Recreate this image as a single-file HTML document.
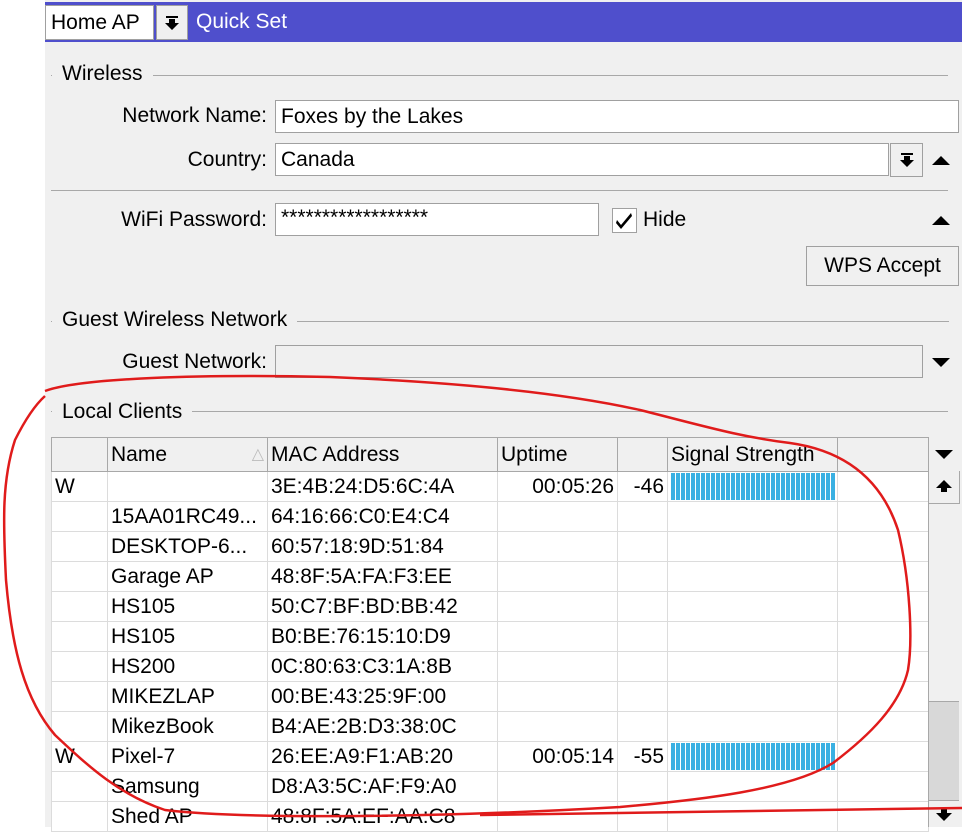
<!DOCTYPE html>
<html><head><meta charset="utf-8"><style>
*{margin:0;padding:0;box-sizing:border-box}
body{width:962px;height:827px;overflow:hidden;background:#fff;font-family:"Liberation Sans",sans-serif;font-size:21px;color:#000;position:relative}
.a{position:absolute}
.inp{position:absolute;background:#fff;border:1px solid #a0a0a0;padding-left:5px;line-height:31px;height:33px}
.lbl{position:absolute;text-align:right;line-height:30px}
.sec{position:absolute;left:51px;right:14px;height:1px;background:#a8a8a8}
.sect{position:absolute;background:#f0f0f0;padding:0 10px;line-height:26px}
.tri{position:absolute;width:0;height:0;border-left:9px solid transparent;border-right:9px solid transparent}
.up{border-bottom:9px solid #000}
.dn{border-top:9px solid #000}
table{position:absolute;left:51px;top:437px;border-collapse:collapse;background:#fff;table-layout:fixed;width:877px}
td,th{border:1px solid #dcdcdc;height:30px;padding:0 3px;font-weight:normal;text-align:left;white-space:nowrap;overflow:hidden;line-height:28px}
th{background:#f0f0f0;border-color:#a8a8a8;height:34px}
.bar{display:inline-block;width:164px;height:27px;vertical-align:middle;background:repeating-linear-gradient(90deg,#3ab0e2 0 4px,#fff 4px 5px)}
</style></head><body>
<div class="a" style="left:45px;top:0;width:917px;height:827px;background:#f0f0f0"></div>
<div class="a" style="left:45px;top:2px;width:917px;height:40px;background:#4f4fcc"></div>
<div class="a" style="left:45px;top:5px;width:109px;height:35px;background:#fff;border:1px solid #a0a0a0;padding-left:5px;line-height:33px">Home AP</div>
<div class="a" style="left:156px;top:5px;width:32px;height:35px;background:#f0f0f0;border:1px solid #a0a0a0"><svg width="30" height="33"><rect x="9" y="10" width="12" height="2"/><path d="M12 13h6v4h4l-7 7-7-7h4z"/></svg></div>
<div class="a" style="left:196px;top:8px;color:#fff;line-height:28px">Quick Set</div>

<div class="sec" style="top:75px"></div>
<div class="sect" style="left:52px;top:61px">Wireless</div>
<div class="lbl" style="left:40px;width:227px;top:101px">Network Name:</div>
<div class="inp" style="left:275px;top:100px;width:684px">Foxes by the Lakes</div>
<div class="lbl" style="left:40px;width:227px;top:145px">Country:</div>
<div class="inp" style="left:275px;top:143px;width:614px">Canada</div>
<div class="a" style="left:890px;top:143px;width:33px;height:34px;border:1px solid #a0a0a0;background:#f0f0f0"><svg width="31" height="32"><rect x="10" y="9" width="12" height="2"/><path d="M13 12h6v4h4l-7 7-7-7h4z"/></svg></div>
<div class="tri up" style="left:932px;top:156px"></div>
<div class="sec" style="top:190px"></div>
<div class="lbl" style="left:40px;width:227px;top:205px">WiFi Password:</div>
<div class="inp" style="left:275px;top:203px;width:324px;line-height:27px">******************</div>
<div class="a" style="left:612px;top:208px;width:25px;height:25px;background:#fff;border:1px solid #a0a0a0"><svg width="23" height="23"><path d="M4 11l4 5 10-12 1 3-11 13-5-6z"/></svg></div>
<div class="a" style="left:643px;top:205px;line-height:30px">Hide</div>
<div class="tri up" style="left:932px;top:216px"></div>
<div class="a" style="left:806px;top:246px;width:153px;height:40px;border:1px solid #a0a0a0;background:#f0f0f0;text-align:center;line-height:38px">WPS Accept</div>

<div class="sec" style="top:321px;right:13px"></div>
<div class="sect" style="left:52px;top:307px">Guest Wireless Network</div>
<div class="lbl" style="left:40px;width:227px;top:347px">Guest Network:</div>
<div class="inp" style="left:275px;top:345px;width:648px;background:#f0f0f0"></div>
<div class="tri dn" style="left:932px;top:358px"></div>

<div class="sec" style="top:411px"></div>
<div class="sect" style="left:52px;top:399px">Local Clients</div>

<table>
<colgroup><col style="width:56px"><col style="width:160px"><col style="width:230px"><col style="width:120px"><col style="width:50px"><col style="width:170px"><col style="width:91px"></colgroup>
<tr><th></th><th>Name<span style="float:right;color:#bbb;font-size:16px">△</span></th><th>MAC Address</th><th>Uptime</th><th></th><th>Signal Strength</th><th></th></tr>
<tr><td>W</td><td></td><td>3E:4B:24:D5:6C:4A</td><td style="text-align:right">00:05:26</td><td style="text-align:right">-46</td><td><span class="bar"></span></td><td></td></tr>
<tr><td></td><td>15AA01RC49...</td><td>64:16:66:C0:E4:C4</td><td></td><td></td><td></td><td></td></tr>
<tr><td></td><td>DESKTOP-6...</td><td>60:57:18:9D:51:84</td><td></td><td></td><td></td><td></td></tr>
<tr><td></td><td>Garage AP</td><td>48:8F:5A:FA:F3:EE</td><td></td><td></td><td></td><td></td></tr>
<tr><td></td><td>HS105</td><td>50:C7:BF:BD:BB:42</td><td></td><td></td><td></td><td></td></tr>
<tr><td></td><td>HS105</td><td>B0:BE:76:15:10:D9</td><td></td><td></td><td></td><td></td></tr>
<tr><td></td><td>HS200</td><td>0C:80:63:C3:1A:8B</td><td></td><td></td><td></td><td></td></tr>
<tr><td></td><td>MIKEZLAP</td><td>00:BE:43:25:9F:00</td><td></td><td></td><td></td><td></td></tr>
<tr><td></td><td>MikezBook</td><td>B4:AE:2B:D3:38:0C</td><td></td><td></td><td></td><td></td></tr>
<tr><td>W</td><td>Pixel-7</td><td>26:EE:A9:F1:AB:20</td><td style="text-align:right">00:05:14</td><td style="text-align:right">-55</td><td><span class="bar"></span></td><td></td></tr>
<tr><td></td><td>Samsung</td><td>D8:A3:5C:AF:F9:A0</td><td></td><td></td><td></td><td></td></tr>
<tr><td></td><td>Shed AP</td><td>48:8F:5A:EF:AA:C8</td><td></td><td></td><td></td><td></td></tr>
</table>

<div class="a" style="left:928px;top:437px;width:34px;height:390px;background:#f0f0f0;border-left:1px solid #a8a8a8"></div>
<div class="tri dn" style="left:935px;top:450px"></div>
<div class="a" style="left:928px;top:471px;width:32px;height:33px;border:1px solid #a8a8a8;border-top:none;background:#f0f0f0"><svg width="30" height="32"><path d="M15 9l-8 8h5v4h6v-4h5z"/></svg></div>
<div class="a" style="left:929px;top:701px;width:30px;height:100px;background:#d8d8d8;border-top:1px solid #a8a8a8;border-bottom:1px solid #a8a8a8"></div>
<div class="a" style="left:929px;top:802px;width:30px;height:25px"><svg width="30" height="25"><path d="M12 7h6v4h5l-8 8-8-8h5z"/></svg></div>

<svg class="a" style="left:0;top:0" width="962" height="827"><path d="M45 391 C80 378 200 374 330 377 C450 382 560 392 640 410 C700 425 740 437 790 443 C840 450 880 475 898 530 C910 580 913 640 908 670 C900 705 870 735 833 763 C790 790 700 800 620 807 C450 817 250 820 165 810 C120 795 90 768 55 735 C25 700 12 650 6 580 C3 520 2 480 15 440 C25 420 35 405 45 396" fill="none" stroke="#e01b1b" stroke-width="2.5"/><path d="M480 815 C700 812 850 810 962 808" fill="none" stroke="#e01b1b" stroke-width="2.5"/></svg>
</body></html>
